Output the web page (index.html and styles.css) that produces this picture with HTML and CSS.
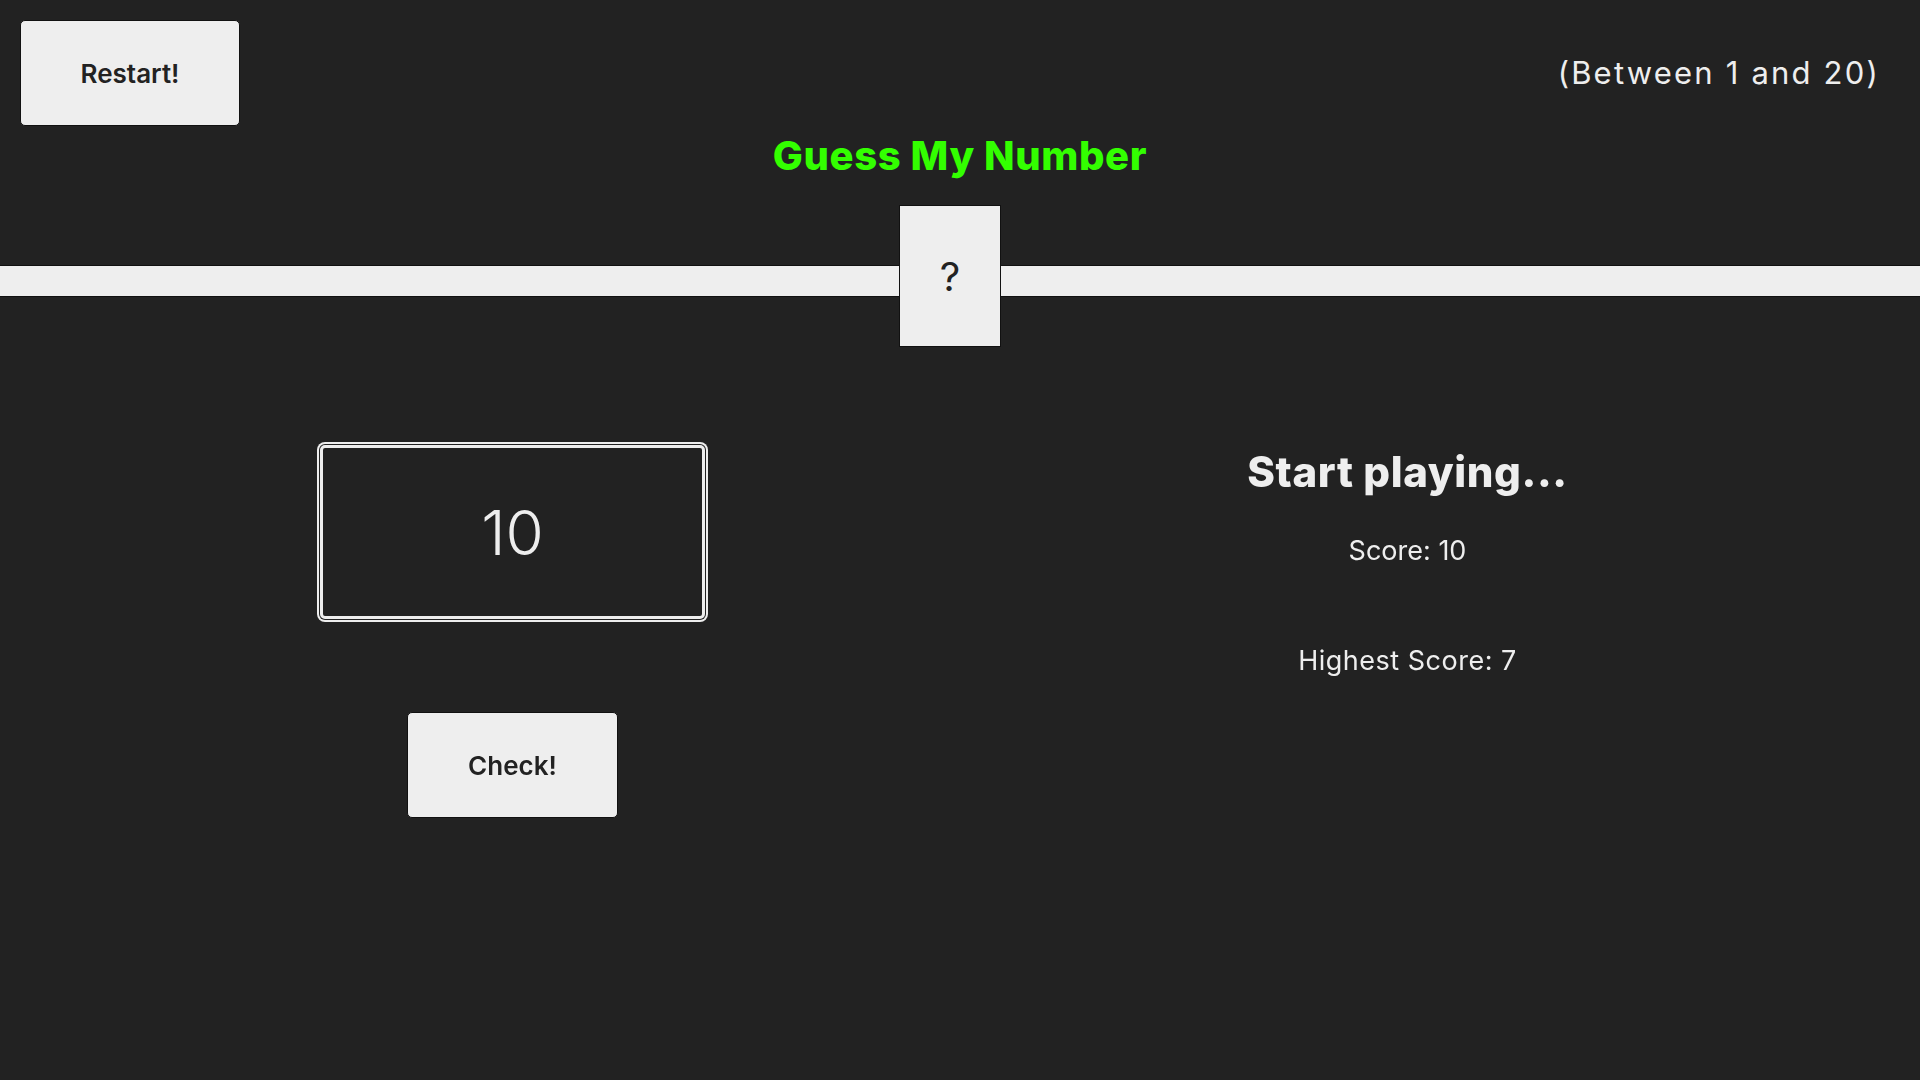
FILE: index.html
```html
<!DOCTYPE html>
<html lang="en">
<head>
<meta charset="utf-8">
<title>Guess My Number!</title>
<link rel="stylesheet" href="styles.css">
</head>
<body>
<header class="header">
  <div class="top-row">
    <button class="btn btn-again">Restart!</button>
    <p class="between">(Between 1 and 20)</p>
  </div>
  <h1 class="title">Guess My Number</h1>
  <div class="stage">
    <div class="number">?</div>
  </div>
</header>
<main class="main">
  <section class="left">
    <input type="text" class="guess" value="10" autofocus>
    <button class="btn btn-check">Check!</button>
  </section>
  <section class="right">
    <p class="message">Start playing...</p>
    <p class="label-score">Score: <span class="score">10</span></p>
    <p class="label-highscore">Highest Score: <span class="highscore">7</span></p>
  </section>
</main>
</body>
</html>
```
FILE: styles.css
```css
* {
  margin: 0;
  padding: 0;
  box-sizing: border-box;
}

body {
  background: #222;
  color: #eee;
  font-family: Inter, "Open Sans", sans-serif;
}

.top-row {
  display: flex;
  justify-content: space-between;
  align-items: center;
  padding: 20px 40px 0 20px;
}

.btn {
  background: #eee;
  color: #222;
  border: 1px solid #111;
  border-radius: 5px;
  font-family: inherit;
  font-weight: 600;
  font-size: 26px;
  cursor: pointer;
}

.btn-again {
  width: 220px;
  height: 106px;
}

.between {
  font-size: 31px;
  letter-spacing: 2.2px;
  line-height: 40px;
}

.title {
  text-align: center;
  color: #33ff00;
  font-size: 40px;
  font-weight: 800;
  letter-spacing: 0.6px;
  line-height: 52px;
  margin-top: 4px;
}

.stage {
  display: flex;
  height: 142px;
  margin-top: 23px;
  background: linear-gradient(to bottom,
    transparent 60px,
    #111 60px 61px,
    #eee 61px 91px,
    #111 91px 92px,
    transparent 92px);
}

.number {
  margin-left: calc(50% - 61px);
  width: 102px;
  height: 142px;
  border: 1px solid #111;
  background: #eee;
  color: #222;
  display: flex;
  align-items: center;
  justify-content: center;
  font-size: 40px;
}

.main {
  display: grid;
  grid-template-columns: 1fr 1fr;
  padding: 0 65px;
}

.left {
  display: flex;
  flex-direction: column;
  align-items: center;
  padding-top: 98px;
  gap: 93px;
}

.guess {
  width: 385px;
  height: 174px;
  border: 3px solid #eee;
  border-radius: 5px;
  background: #222;
  color: #eee;
  caret-color: #eee;
  font-family: inherit;
  font-size: 62px;
  font-weight: 300;
  text-align: center;
  outline: none;
  box-shadow: 0 0 0 1px #222, 0 0 0 3px #eee;
}

.btn-check {
  width: 211px;
  height: 106px;
}

.right {
  display: flex;
  flex-direction: column;
  align-items: center;
  padding-top: 100px;
}

.message {
  font-size: 42px;
  font-weight: 800;
  letter-spacing: 0.6px;
  line-height: 50px;
}

.label-score {
  font-size: 27px;
  line-height: 34px;
  margin-top: 37px;
}

.label-highscore {
  font-size: 27px;
  letter-spacing: 0.5px;
  line-height: 34px;
  margin-top: 76px;
}
```
